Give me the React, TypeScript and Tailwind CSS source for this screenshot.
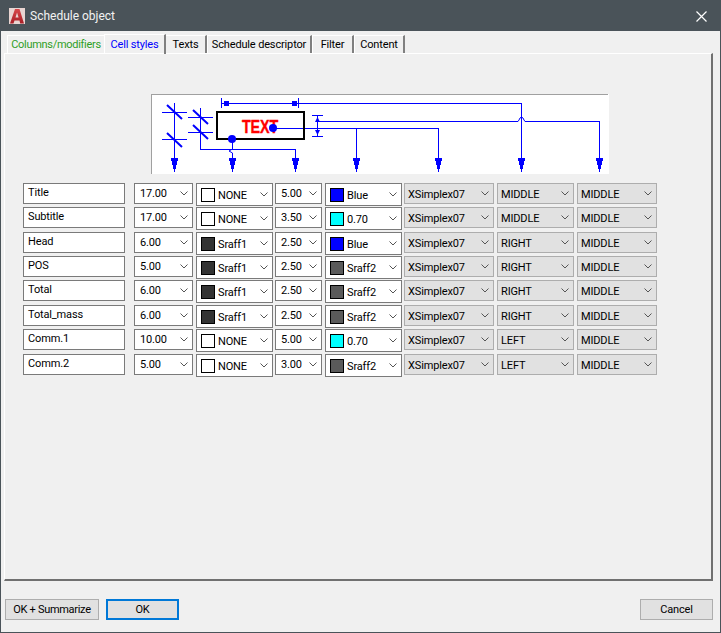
import React from "react";

const font = { fontFamily: 'Roboto, "Liberation Sans", sans-serif' };

function Chevron() {
  return (
    <svg width="8" height="5" viewBox="0 0 8 5" className="shrink-0">
      <polyline points="0.5,0.5 4,4 7.5,0.5" fill="none" stroke="#555555" strokeWidth="1" />
    </svg>
  );
}

function Box({ value, w, gray }: { value: string; w: string; gray?: boolean }) {
  return (
    <div className={`flex h-[21px] items-center justify-between border pr-[4px] ${w} ${gray ? "border-[#adadad] bg-[#e1e1e1] pl-[3px]" : "border-[#7a7a7a] bg-white pl-[5px]"}`}>
      <span className={gray ? "pt-[1px]" : ""}>{value}</span>
      <Chevron />
    </div>
  );
}

function ColorBox({ value, color }: { value: string; color: string }) {
  return (
    <div className="flex h-[23px] w-[77px] items-center border border-[#7a7a7a] bg-white pl-[4px] pr-[4px]">
      <span className={`mr-[3px] h-[14px] w-[14px] shrink-0 border border-black ${color}`} />
      <span className="flex-1 pt-[1px]">{value}</span>
      <Chevron />
    </div>
  );
}

const swatch: Record<string, string> = {
  NONE: "bg-white",
  Sraff1: "bg-[#333333]",
  Sraff2: "bg-[#5a5a5a]",
  Blue: "bg-[#0000ff]",
  "0.70": "bg-[#00ffff]",
};

const rows = [
  { n: "Title", h: "17.00", f: "NONE", t: "5.00", c: "Blue", a: "MIDDLE", b: "MIDDLE", mb: "mb-0" },
  { n: "Subtitle", h: "17.00", f: "NONE", t: "3.50", c: "0.70", a: "MIDDLE", b: "MIDDLE", mb: "mb-[1px]" },
  { n: "Head", h: "6.00", f: "Sraff1", t: "2.50", c: "Blue", a: "RIGHT", b: "MIDDLE", mb: "mb-0" },
  { n: "POS", h: "5.00", f: "Sraff1", t: "2.50", c: "Sraff2", a: "RIGHT", b: "MIDDLE", mb: "mb-0" },
  { n: "Total", h: "6.00", f: "Sraff1", t: "2.50", c: "Sraff2", a: "RIGHT", b: "MIDDLE", mb: "mb-[1px]" },
  { n: "Total_mass", h: "6.00", f: "Sraff1", t: "2.50", c: "Sraff2", a: "RIGHT", b: "MIDDLE", mb: "mb-0" },
  { n: "Comm.1", h: "10.00", f: "NONE", t: "5.00", c: "0.70", a: "LEFT", b: "MIDDLE", mb: "mb-[1px]" },
  { n: "Comm.2", h: "5.00", f: "NONE", t: "3.00", c: "Sraff2", a: "LEFT", b: "MIDDLE", mb: "mb-0" },
];

function Arrow({ x }: { x: number }) {
  return (
    <g fill="#0000ff" shapeRendering="crispEdges">
      <polygon points={`${x - 3.5},158 ${x + 3.5},158 ${x + 3.5},161 ${x + 2.5},161 ${x + 2.5},165 ${x + 1.5},165 ${x + 1.5},169 ${x - 1.5},169 ${x - 1.5},165 ${x - 2.5},165 ${x - 2.5},161 ${x - 3.5},161`} />
      <rect x={x - 0.5} y="168" width="1" height="4" />
    </g>
  );
}

function Diagram() {
  const blue = "#0000ff";
  return (
    <svg width="458" height="80" viewBox="151 94 458 80" className="block">
      <rect x="151" y="94" width="458" height="80" fill="#ffffff" />
      <rect x="151" y="94" width="457" height="1" fill="#a0a0a0" />
      <rect x="151" y="94" width="1" height="80" fill="#a0a0a0" />
      <g stroke={blue} strokeWidth="1" fill="none" shapeRendering="crispEdges">
        <path d="M174.5 103V158M162 112.5H187M162 139.5H187" />
        <path d="M200.5 108V149.5H295.5V158M188 117.5H213M188 132.5H213" />
        <path d="M221.5 98V108M298.5 98V108M221 103.5H521.5V158" />
        <path d="M312 115.5H323M312 136.5H323M317.5 115V136" />
        <path d="M318 121.5H518M525 121.5H599.5V158" />
        <path d="M273 128.5H438.5V158M356.5 128V158" />
        <path d="M232.5 139V149" />
        <path d="M232.5 153V158" />
      </g>
      <path d="M518 121.5L519 120L520 118L521.5 117L523 118L524 120L525 121.5" stroke={blue} strokeWidth="1" fill="none" />
      <path d="M232.5 149L229 151L232.5 153" stroke={blue} strokeWidth="1" fill="none" />
      <g stroke={blue} strokeWidth="2" fill="none">
        <path d="M167 105L182 119M167 133L182 147M193 110L208 124M193 125L208 139" />
      </g>
      <rect x="217" y="112" width="87" height="27" fill="none" stroke="#000000" strokeWidth="2" />
      <text x="242" y="133" fill="#ff0000" stroke="#ff0000" strokeWidth="0.4" fontSize="18" fontWeight="700" textLength="36" lengthAdjust="spacingAndGlyphs" style={{ fontFamily: '"Liberation Sans", sans-serif' }}>TEXT</text>
      <circle cx="273" cy="128" r="4" fill={blue} />
      <circle cx="232" cy="139" r="4" fill={blue} />
      <g fill={blue}>
        <rect x="224" y="101" width="5" height="5" />
        <rect x="292" y="101" width="5" height="5" />
        <polygon points="317.5,117 315,122 320,122" />
        <polygon points="317.5,135 315,130 320,130" />
      </g>
      {[174, 232, 295, 356, 438, 521, 599].map((x) => (
        <Arrow key={x} x={x + 0.5} />
      ))}
    </svg>
  );
}

export default function App() {
  return (
    <div className="flex h-[633px] w-[721px] flex-col whitespace-nowrap border border-[#4a5359] bg-[#f0f0f0] text-[11px] leading-none tracking-[-0.15px] text-black" style={font}>
      <div className="flex h-[30px] shrink-0 items-center justify-between bg-[#4a5359] pl-[8px] pr-[13px] text-[12px] tracking-normal text-[#f2f2f2]">
        <div className="flex items-center">
          <svg width="16" height="16" viewBox="0 0 16 16" className="mr-[5px]">
            <defs>
              <linearGradient id="lg" x1="0" y1="0" x2="0" y2="1">
                <stop offset="0" stopColor="#d8484a" />
                <stop offset="1" stopColor="#a81e26" />
              </linearGradient>
            </defs>
            <rect width="16" height="16" fill="#e9d5d2" />
            <path d="M1 15.5L6 1H10.5L15 15.5H11.2L10.5 12.5H5.5L4.5 15.5Z" fill="url(#lg)" />
            <path d="M6.5 9.5H9.6L8 4.5Z" fill="#e9d5d2" />
          </svg>
          <span>Schedule object</span>
        </div>
        <svg width="11" height="11" viewBox="0 0 11 11">
          <path d="M0.5 0.5L10.5 10.5M10.5 0.5L0.5 10.5" stroke="#ffffff" strokeWidth="1.2" />
        </svg>
      </div>

      <div className="flex h-[22px] shrink-0 items-end pl-[6px]">
        <div className="flex h-[18px] w-[97px] items-center justify-center border-l border-t border-white pb-[1px] tracking-[-0.3px] text-[#2e9e1f]">Columns/modifiers</div>
        <div className="relative z-10 -mb-[1px] flex h-[20px] w-[62px] items-center justify-center border-l border-t border-white border-r-2 border-r-[#808080] text-[#0000ff]">Cell styles</div>
        <div className="flex h-[18px] w-[41px] items-center justify-center border-t border-white border-r-2 border-r-[#808080] pb-[1px]">Texts</div>
        <div className="flex h-[18px] w-[105px] items-center justify-center border-t border-l border-white border-r-2 border-r-[#808080] pb-[1px]">Schedule descriptor</div>
        <div className="flex h-[18px] w-[42px] items-center justify-center border-t border-l border-white border-r-2 border-r-[#808080] pb-[1px]">Filter</div>
        <div className="flex h-[18px] w-[51px] items-center justify-center border-t border-l border-white border-r-2 border-r-[#808080] pb-[1px]">Content</div>
      </div>

      <div className="ml-[3px] flex h-[528px] w-[709px] shrink-0 flex-col border-l border-t border-white border-r-2 border-b-2 border-r-[#707070] border-b-[#707070]">
        <div className="ml-[146px] mt-[40px]">
          <Diagram />
        </div>
        <div className="ml-[18px] mt-[9px] flex flex-col">
          {rows.map((r) => (
            <div key={r.n} className={`flex h-[24px] items-start ${r.mb}`}>
              <div className="mr-[9px] flex h-[21px] w-[102px] items-center border border-[#7a7a7a] bg-white pl-[4px] pb-[2px]">{r.n}</div>
              <Box value={r.h} w="w-[59px]" />
              <div className="ml-[3px]"><ColorBox value={r.f} color={swatch[r.f]} /></div>
              <div className="ml-[2px]"><Box value={r.t} w="w-[47px]" /></div>
              <div className="ml-[3px]"><ColorBox value={r.c} color={swatch[r.c]} /></div>
              <div className="ml-[2px]"><Box value="XSimplex07" w="w-[90px]" gray /></div>
              <div className="ml-[3px]"><Box value={r.a} w="w-[77px]" gray /></div>
              <div className="ml-[3px]"><Box value={r.b} w="w-[80px]" gray /></div>
            </div>
          ))}
        </div>
      </div>

      <div className="flex shrink-0 justify-between pl-[4px] pr-[7px] pt-[18px]">
        <div className="flex gap-[7px]">
          <div className="flex h-[21px] w-[94px] items-center justify-center border border-[#adadad] bg-[#e1e1e1] tracking-[-0.3px]">OK + Summarize</div>
          <div className="flex h-[21px] w-[73px] items-center justify-center border-2 border-[#0078d7] bg-[#e1e1e1]">OK</div>
        </div>
        <div className="flex h-[21px] w-[73px] items-center justify-center border border-[#adadad] bg-[#e1e1e1]">Cancel</div>
      </div>
    </div>
  );
}
